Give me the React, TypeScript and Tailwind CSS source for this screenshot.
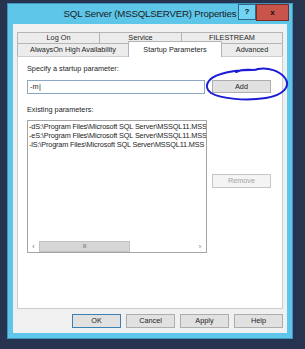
import React from 'react';

const params = [
  '-dS:\\Program Files\\Microsoft SQL Server\\MSSQL11.MSS',
  '-eS:\\Program Files\\Microsoft SQL Server\\MSSQL11.MSS',
  '-lS:\\Program Files\\Microsoft SQL Server\\MSSQL11.MSS',
];

function Tab({ label, className = '' }: { label: string; className?: string }) {
  return (
    <div
      className={`flex items-center justify-center border border-b-0 border-[#b4b4b4] bg-[#ececec] text-[#1e1e1e] leading-none ${className}`}
    >
      {label}
    </div>
  );
}

function Button({ label, className = '' }: { label: string; className?: string }) {
  return (
    <div
      className={`flex items-center justify-center border bg-[#e1e1e1] text-[#1e1e1e] leading-none ${className}`}
    >
      {label}
    </div>
  );
}

export default function App() {
  return (
    <div className="relative w-[305px] h-[349px] overflow-hidden bg-[#26344f] pl-[7px] pt-[3px] font-['Liberation_Sans',Arial,sans-serif] text-[7.3px]">
      <div className="w-[286px] h-[336px] flex flex-col bg-[#5ec6e9] border border-[#3f95bd]">
        {/* Title bar */}
        <div className="relative h-[20px] flex items-center justify-center">
          <span className="text-[9.7px] tracking-[-0.2px] text-[#1b1b1b]">
            SQL Server (MSSQLSERVER) Properties
          </span>
          <div className="absolute top-0 right-[3px] flex items-start">
            <div className="w-[18px] h-[16px] flex items-center justify-center bg-[#72d3f2] border border-[#2e6a88] text-[8px] font-bold text-[#111]">
              ?
            </div>
            <div className="w-[33px] h-[17px] flex items-center justify-center bg-[#c9544c] border border-[#7d2b25] text-[8px] font-bold text-[#111]">
              x
            </div>
          </div>
        </div>

        {/* Client area */}
        <div className="mx-[5px] h-[309px] flex flex-col bg-[#f0f0f0] px-[4px] pt-[8px]">
          <div className="flex h-[11px]">
            <Tab label="Log On" className="w-[83px]" />
            <Tab label="Service" className="w-[83px] -ml-px" />
            <Tab label="FILESTREAM" className="flex-1 -ml-px" />
          </div>
          <div className="flex h-[13px]">
            <Tab label="AlwaysOn High Availability" className="w-[112px]" />
            <div className="relative z-10 w-[94px] -mt-[2px] -mb-px -ml-px flex items-center justify-center border border-b-0 border-[#b4b4b4] bg-white text-[#1e1e1e] leading-none">
              Startup Parameters
            </div>
            <Tab label="Advanced" className="flex-1 -ml-px" />
          </div>

          {/* Panel */}
          <div className="h-[253px] flex flex-col bg-white border border-[#cdcdcd] pl-[9px] text-[#1e1e1e]">
            <div className="mt-[7px] leading-[10px]">Specify a startup parameter:</div>
            <div className="mt-[6px] flex items-start">
              <div className="w-[178px] h-[14px] flex items-center border border-[#8ea6c6] pl-[2px] leading-none">
                -m<span className="ml-[0.5px] font-light">|</span>
              </div>
              <Button label="Add" className="ml-[7px] w-[59px] h-[13px] border-[#adadad]" />
            </div>
            <div className="mt-[11px] leading-[10px]">Existing parameters:</div>
            <div className="mt-[5px] flex items-start">
              <div className="w-[180px] h-[133px] flex flex-col border border-[#a5a5a5]">
                <div className="flex-1 overflow-hidden whitespace-nowrap pl-[1px] pt-[1px] leading-[9px] tracking-[-0.15px]">
                  {params.map((p, i) => (
                    <div key={i}>{p}</div>
                  ))}
                </div>
                <div className="h-[11px] flex text-[#6a6a6a] leading-none">
                  <div className="w-[11px] flex items-center justify-center text-[7px]">‹</div>
                  <div className="w-[91px] flex items-center justify-center bg-[#d6d6d6] border border-[#c2c2c2] text-[5px] tracking-[-0.3px]">
                    III
                  </div>
                  <div className="flex-1 bg-white" />
                  <div className="w-[12px] flex items-center justify-center text-[7px]">›</div>
                </div>
              </div>
              <div className="ml-[5px] mt-[54px] w-[59px] h-[14px] flex items-center justify-center border border-[#c6c6c6] bg-[#f4f4f4] text-[#a3a3a3] leading-none">
                Remove
              </div>
            </div>
          </div>

          {/* Dialog buttons */}
          <div className="mt-[5px] flex justify-end gap-[5px]">
            <Button label="OK" className="w-[49px] h-[14px] border-[#3c7fb1]" />
            <Button label="Cancel" className="w-[49px] h-[14px] border-[#adadad]" />
            <Button label="Apply" className="w-[49px] h-[14px] border-[#adadad]" />
            <Button label="Help" className="w-[49px] h-[14px] border-[#adadad]" />
          </div>
        </div>
      </div>

      {/* Hand-drawn annotation around Add */}
      <svg
        className="absolute left-0 top-0 pointer-events-none"
        width="305"
        height="349"
        viewBox="0 0 305 349"
        fill="none"
      >
        <path
          d="M236 72 C246 67 252 72 258 69 C268 67 280 71 285 78 C291 86 284 95 266 98 C246 101 221 99 211 93 C203 87 207 78 221 74 C230 71 240 70 252 70"
          stroke="#1c1cd6"
          strokeWidth="2"
          strokeLinecap="round"
        />
      </svg>
    </div>
  );
}
